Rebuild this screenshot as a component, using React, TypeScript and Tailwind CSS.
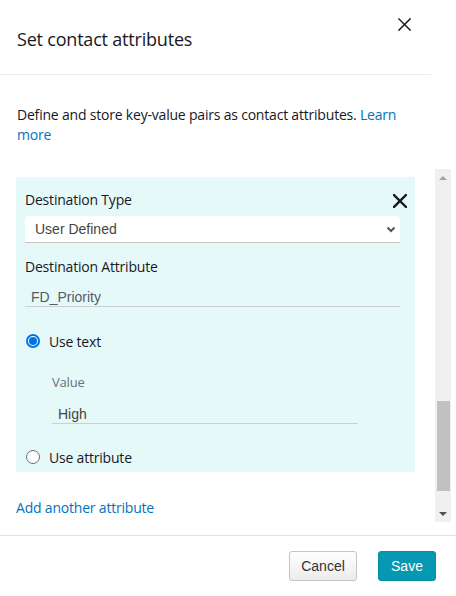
import React from 'react';

// Set contact attributes dialog

const UI = { fontFamily: '"Open Sans", "Noto Sans", Arial, sans-serif', letterSpacing: '-0.2px' };
const ARIAL = { fontFamily: '"Liberation Sans", Arial, sans-serif', letterSpacing: '0px' };

function CloseIcon({ size, stroke }: { size: number; stroke: number }) {
  return (
    <svg width={size} height={size} viewBox="0 0 14 14" fill="none">
      <path d="M1 1L13 13M13 1L1 13" stroke="#16191f" strokeWidth={stroke} strokeLinecap="square" />
    </svg>
  );
}

function Radio({ checked, label }: { checked: boolean; label: string }) {
  return (
    <div className="flex h-5 items-center">
      <div className="ml-[1px] flex h-[14px] w-[14px] items-center justify-center">
        {checked ? (
          <span className="flex h-[14px] w-[14px] items-center justify-center rounded-full border-[2px] border-[#0073e6] bg-white">
            <span className="h-[8px] w-[8px] rounded-full bg-[#0073e6]" />
          </span>
        ) : (
          <span className="h-[14px] w-[14px] rounded-full border border-[#687078] bg-white" />
        )}
      </div>
      <span className="ml-[9px] text-[14px] text-[#16191f]">{label}</span>
    </div>
  );
}

function Scrollbar() {
  return (
    <div className="flex w-[16px] flex-col items-center bg-[#f0f0f0]">
      <div className="flex h-[17px] w-full items-center justify-center">
        <span className="h-0 w-0 border-x-[4px] border-b-[4px] border-x-transparent border-b-[#a3a3a3]" />
      </div>
      <div className="h-[215px]" />
      <div className="h-[90px] w-[13px] bg-[#c1c1c1]" />
      <div className="flex-1" />
      <div className="flex h-[17px] w-full items-center justify-center">
        <span className="h-0 w-0 border-x-[4px] border-t-[4px] border-x-transparent border-t-[#505050]" />
      </div>
    </div>
  );
}

export default function App() {
  return (
    <div className="flex h-[596px] w-[456px] flex-col bg-white" style={UI}>
      <header className="flex h-[75px] w-[431px] border-b border-[#e9ebed]">
        <h2 className="ml-[17px] mt-[27px] text-[18px] leading-6 font-normal text-[#16191f]">Set contact attributes</h2>
        <button className="ml-auto mr-[20px] mt-[18px] h-[13px]">
          <CloseIcon size={13} stroke={1.6} />
        </button>
      </header>

      <p className="ml-[17px] mt-[30px] w-[400px] text-[14px] leading-5 text-[#16191f]">
        Define and store key-value pairs as contact attributes. <a className="text-[#0073bb]">Learn</a>{' '}
        <a className="text-[#0073bb]">more</a>
      </p>

      <div className="mt-[24px] flex h-[353px]">
        <div className="w-[435px] overflow-hidden">
          <div className="ml-[16px] mt-[8px] w-[399px] bg-[#e6f9f9] pb-[5px] pl-[9px] pr-[15px] pt-3">
            <div className="flex h-5 items-center justify-between">
              <span className="text-[14px] font-medium text-[#16191f]">Destination Type</span>
              <span className="mr-[-7px] mt-[3px]">
                <CloseIcon size={14} stroke={2.4} />
              </span>
            </div>
            <div
              className="mt-[7px] flex h-[27px] items-center justify-between rounded-t-[4px] border-b border-[#c6c6c6] bg-white pl-[10px] pr-[4px] text-[14px] text-[#444]"
              style={ARIAL}
            >
              <span>User Defined</span>
              <svg width="10" height="7" viewBox="0 0 10 7">
                <path d="M1.5 1.5L5 5L8.5 1.5" stroke="#555" strokeWidth="2" fill="none" />
              </svg>
            </div>
            <div className="mt-[14px] h-5 text-[14px] font-medium leading-5 text-[#16191f]">Destination Attribute</div>
            <div
              className="mt-[2px] flex h-[28px] items-center border-b border-[#c9d1d3] pl-[6px] pt-[10px] text-[14px] text-[#545b64]"
              style={ARIAL}
            >
              FD_Priority
            </div>
            <div className="mt-[24px]">
              <Radio checked label="Use text" />
            </div>
            <div className="ml-[27px] mt-[21px] h-5 text-[13px] leading-5 text-[#687078]">Value</div>
            <div
              className="ml-[27px] mt-[7px] flex h-[25px] w-[306px] items-center border-b border-[#c9d1d3] pl-[6px] pt-[6px] text-[14px] text-[#444]"
              style={ARIAL}
            >
              High
            </div>
            <div className="mt-[23px]">
              <Radio checked={false} label="Use attribute" />
            </div>
          </div>
          <a className="ml-[16px] mt-[26px] block text-[14px] leading-5 text-[#0073bb]">Add another attribute</a>
        </div>
        <Scrollbar />
      </div>

      <footer className="mt-[13px] flex justify-end gap-[21px] border-t border-[#e0e0e0] pr-[20px] pt-[15px]" style={ARIAL}>
        <button className="h-[30px] w-[68px] rounded-[3px] border border-[#c5c5c5] bg-gradient-to-b from-white to-[#ececec] text-[14px] text-[#333]">
          Cancel
        </button>
        <button className="h-[30px] w-[58px] rounded-[3px] border border-[#0590a8] bg-[#0697b1] text-[14px] text-white">
          Save
        </button>
      </footer>
    </div>
  );
}
